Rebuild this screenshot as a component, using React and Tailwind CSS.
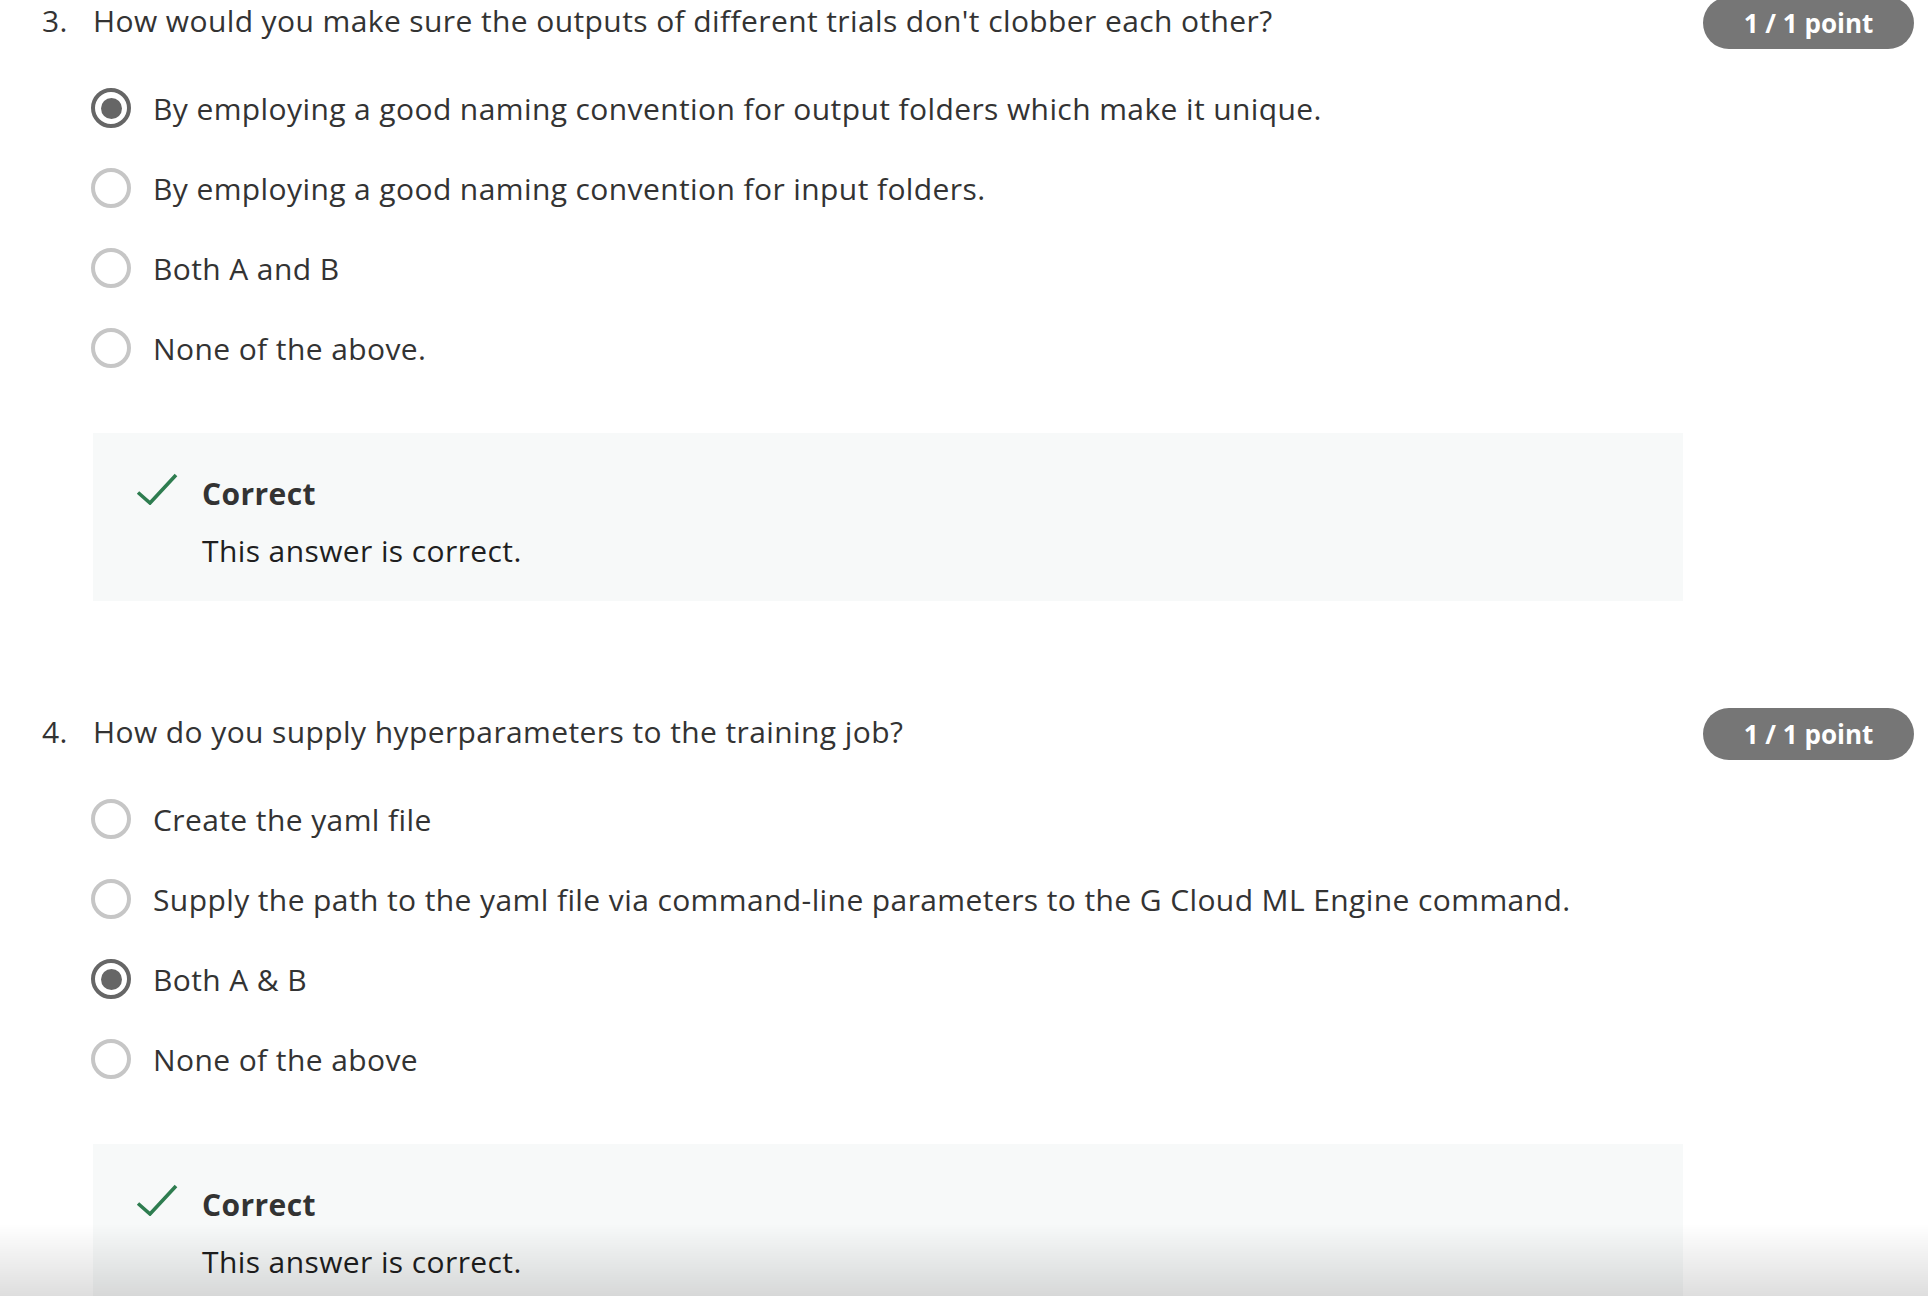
import React from 'react';

const questions = [
  {
    number: '3.',
    title: "How would you make sure the outputs of different trials don't clobber each other?",
    options: [
      'By employing a good naming convention for output folders which make it unique.',
      'By employing a good naming convention for input folders.',
      'Both A and B',
      'None of the above.',
    ],
    selected: 0,
  },
  {
    number: '4.',
    title: 'How do you supply hyperparameters to the training job?',
    options: [
      'Create the yaml file',
      'Supply the path to the yaml file via command-line parameters to the G Cloud ML Engine command.',
      'Both A & B',
      'None of the above',
    ],
    selected: 2,
  },
];

function Radio({ checked }) {
  if (checked) {
    return (
      <span className="flex h-[40px] w-[40px] shrink-0 items-center justify-center rounded-full border-[4px] border-[#666666]">
        <span className="h-[21px] w-[21px] rounded-full bg-[#666666]" />
      </span>
    );
  }
  return <span className="h-[40px] w-[40px] shrink-0 rounded-full border-[4px] border-[#c6c6c6]" />;
}

function CheckIcon() {
  return (
    <svg width="42" height="32" viewBox="0 0 42 32" fill="none">
      <path d="M2 19.5 L14 30 L40 2" stroke="#2e7d50" strokeWidth="3.6" strokeLinecap="butt" strokeLinejoin="miter" />
    </svg>
  );
}

function Feedback() {
  return (
    <div className="mt-[45px] flex bg-[#f7f9f9] pb-[30px] pl-[43px] pt-[40px]">
      <div className="w-[66px] shrink-0">
        <CheckIcon />
      </div>
      <div className="flex flex-col pt-[1px]">
        <div className="text-[30px] font-bold leading-[40px] tracking-[0.4px] text-[#333333]">Correct</div>
        <div className="mt-[17px] text-[30px] leading-[40px] tracking-[0.4px] text-[#1f1f1f]">
          This answer is correct.
        </div>
      </div>
    </div>
  );
}

function Question({ q }) {
  return (
    <div className="mb-[107px] flex">
      <div className="w-[51px] shrink-0 pt-[4px] text-[30px] leading-[40px] tracking-[0.4px] text-[#333333]">
        {q.number}
      </div>
      <div className="min-w-0 flex-1">
        <div className="h-[52px] pt-[4px] text-[30px] leading-[40px] tracking-[0.4px] text-[#333333]">{q.title}</div>
        <div className="mt-[19px] flex flex-col">
          {q.options.map((opt, i) => (
            <div key={i} className="-ml-[2px] flex h-[80px] items-center gap-[22px]">
              <Radio checked={i === q.selected} />
              <span className="pt-[2px] text-[30px] leading-[40px] tracking-[0.4px] text-[#333333]">{opt}</span>
            </div>
          ))}
        </div>
        <Feedback />
      </div>
      <div className="ml-[20px] w-[211px] shrink-0">
        <div className="flex h-[52px] items-center justify-center rounded-full bg-[#767676] text-[26px] font-bold text-white">
          1 / 1 point
        </div>
      </div>
    </div>
  );
}

export default function App() {
  return (
    <div className="relative min-h-screen overflow-hidden bg-white font-['Open_Sans',sans-serif]">
      <div className="-mt-[3px] pl-[42px] pr-[14px]">
        {questions.map((q) => (
          <Question key={q.number} q={q} />
        ))}
      </div>
      <div className="pointer-events-none fixed bottom-0 left-0 right-0 h-[72px] bg-gradient-to-b from-[rgba(0,0,0,0)] to-[rgba(0,0,0,0.13)]" />
    </div>
  );
}
